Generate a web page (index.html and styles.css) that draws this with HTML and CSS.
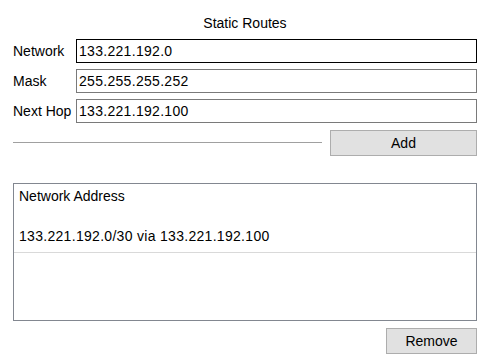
FILE: index.html
```html
<!DOCTYPE html>
<html>
<head>
<meta charset="utf-8">
<link rel="stylesheet" href="styles.css">
</head>
<body>
<div class="panel">
  <div class="title">Static Routes</div>
  <div class="form">
    <div class="row">
      <label class="label">Network</label>
      <div class="field field-active">133.221.192.0</div>
    </div>
    <div class="row">
      <label class="label">Mask</label>
      <div class="field">255.255.255.252</div>
    </div>
    <div class="row">
      <label class="label">Next Hop</label>
      <div class="field">133.221.192.100</div>
    </div>
  </div>
  <div class="add-row">
    <div class="rule"></div>
    <button class="btn btn-add">Add</button>
  </div>
  <div class="list">
    <div class="list-header">Network Address</div>
    <div class="list-item">133.221.192.0/30 via 133.221.192.100</div>
  </div>
  <div class="remove-row">
    <button class="btn btn-remove">Remove</button>
  </div>
</div>
</body>
</html>
```

FILE: styles.css
```css
html, body {
  margin: 0;
  padding: 0;
  background: #ffffff;
}

body {
  font-family: "Liberation Sans", Arial, sans-serif;
  font-size: 14px;
  color: #000000;
}

.panel {
  padding: 15px 7px 0 13px;
  display: flex;
  flex-direction: column;
}

.title {
  text-align: center;
  line-height: 16px;
  height: 16px;
  margin-bottom: 8px;
}

.form {
  display: flex;
  flex-direction: column;
  gap: 6px;
}

.row {
  display: flex;
  align-items: center;
  height: 24px;
}

.label {
  width: 63px;
  flex: none;
  line-height: 16px;
}

.field {
  flex: 1;
  height: 24px;
  box-sizing: border-box;
  border: 1px solid #7a7a7a;
  padding: 0 2px;
  line-height: 22px;
  letter-spacing: 0.3px;
}

.field-active {
  border-color: #000000;
}

.add-row {
  display: flex;
  align-items: center;
  margin-top: 7px;
  height: 26px;
}

.rule {
  flex: 1;
  height: 1px;
  background: #a0a0a0;
  margin-right: 8px;
  margin-top: -2px;
}

.btn {
  font-family: "Liberation Sans", Arial, sans-serif;
  font-size: 14px;
  color: #000000;
  background: #e1e1e1;
  border: 1px solid #adadad;
  height: 26px;
  box-sizing: border-box;
  padding: 0;
  margin: 0;
  line-height: 24px;
}

.btn-add {
  width: 147px;
  flex: none;
}

.list {
  margin-top: 27px;
  height: 138px;
  box-sizing: border-box;
  border: 1px solid #828790;
  display: flex;
  flex-direction: column;
}

.list-header {
  padding: 4px 0 0 5px;
  line-height: 16px;
}

.list-item {
  padding: 24px 0 8px 5px;
  line-height: 16px;
  letter-spacing: 0.3px;
  border-bottom: 1px solid #d9d9d9;
}

.remove-row {
  display: flex;
  justify-content: flex-end;
  margin-top: 7px;
}

.btn-remove {
  width: 91px;
}
```
